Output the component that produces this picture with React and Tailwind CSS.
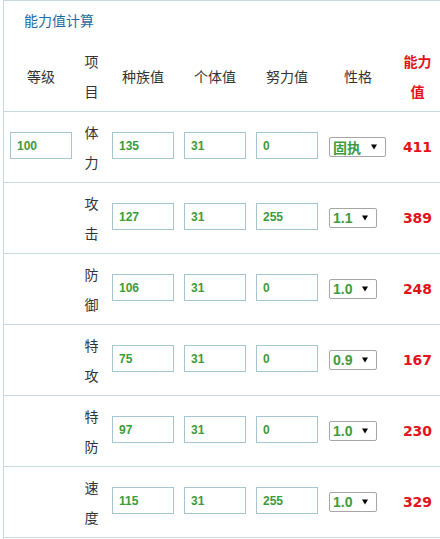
import React from "react";

const rows = [
  { label: ["体", "力"], base: "135", iv: "31", ev: "0", nature: "固执", result: "411", level: "100" },
  { label: ["攻", "击"], base: "127", iv: "31", ev: "255", nature: "1.1", result: "389" },
  { label: ["防", "御"], base: "106", iv: "31", ev: "0", nature: "1.0", result: "248" },
  { label: ["特", "攻"], base: "75", iv: "31", ev: "0", nature: "0.9", result: "167" },
  { label: ["特", "防"], base: "97", iv: "31", ev: "0", nature: "1.0", result: "230" },
  { label: ["速", "度"], base: "115", iv: "31", ev: "255", nature: "1.0", result: "329" },
];

const cjk = { fontFamily: '"Noto Sans CJK SC", "Noto Sans", sans-serif' };

function Input({ value }) {
  return (
    <div
      className="w-[62px] h-[27px] border border-[#a3c6d1] bg-white flex items-center pl-[6px] text-[12px] font-bold text-[#3d9b3d]"
      style={{ fontFamily: '"Liberation Sans", Arial, sans-serif' }}
    >
      {value}
    </div>
  );
}

function Select({ value }) {
  const isCjk = /[^\x00-\x7f]/.test(value);
  return (
    <div className="h-[20px] border border-[#a6a6a6] rounded-[2px] bg-white flex items-center pl-[3px] pr-[8px] gap-[10px]">
      <span
        className="text-[14px] font-bold text-[#3d9b3d] leading-none"
        style={isCjk ? cjk : { fontFamily: '"Liberation Sans", Arial, sans-serif' }}
      >
        {value}
      </span>
      <svg width="6" height="6" viewBox="0 0 6 6">
        <polygon points="0,0.5 6,0.5 3,5.5" fill="#000" />
      </svg>
    </div>
  );
}

export default function App() {
  return (
    <div className="w-[440px] h-[539px] bg-white overflow-hidden">
      <div className="ml-[3px] h-[539px] border-l border-t border-[#c8d9e2]">
        <div className="h-[40px] pt-[9px] pl-[20px]">
          <div className="text-[14px] leading-[20px] text-[#1f69a6]" style={cjk}>
            能力值计算
          </div>
        </div>
        <div className="flex h-[71px] border-b border-[#c8d9e2] text-[14px] text-[#333]" style={cjk}>
          <div className="w-[74px] flex items-center justify-center">等级</div>
          <div className="w-[27px] flex flex-col items-center justify-center leading-[30px]">
            <span>项</span>
            <span>目</span>
          </div>
          <div className="w-[76px] flex items-center justify-center">种族值</div>
          <div className="w-[68px] flex items-center justify-center">个体值</div>
          <div className="w-[76px] flex items-center justify-center">努力值</div>
          <div className="w-[66px] flex items-center justify-center">性格</div>
          <div className="w-[49px] pl-[4px] flex flex-col items-center justify-center leading-[30px] font-bold text-[#e3131b]">
            <span>能力</span>
            <span>值</span>
          </div>
        </div>
        {rows.map((r, i) => (
          <div key={i} className="flex h-[71px] border-b border-[#c8d9e2]">
            <div className="w-[74px] flex items-center justify-center pb-[3px]">
              {r.level ? <Input value={r.level} /> : null}
            </div>
            <div
              className="w-[27px] flex flex-col items-center justify-center leading-[30px] text-[14px] text-[#333]"
              style={cjk}
            >
              <span>{r.label[0]}</span>
              <span>{r.label[1]}</span>
            </div>
            <div className="w-[76px] flex items-center justify-center pb-[3px]">
              <Input value={r.base} />
            </div>
            <div className="w-[68px] flex items-center justify-center pb-[3px]">
              <Input value={r.iv} />
            </div>
            <div className="w-[76px] flex items-center justify-center pb-[3px]">
              <Input value={r.ev} />
            </div>
            <div className="w-[66px] flex items-center pl-[4px]">
              <Select value={r.nature} />
            </div>
            <div
              className="w-[49px] pl-[4px] flex items-center justify-center text-[14px] font-bold text-[#e3131b]"
              style={{ fontFamily: '"DejaVu Sans", Verdana, sans-serif' }}
            >
              {r.result}
            </div>
          </div>
        ))}
      </div>
    </div>
  );
}
